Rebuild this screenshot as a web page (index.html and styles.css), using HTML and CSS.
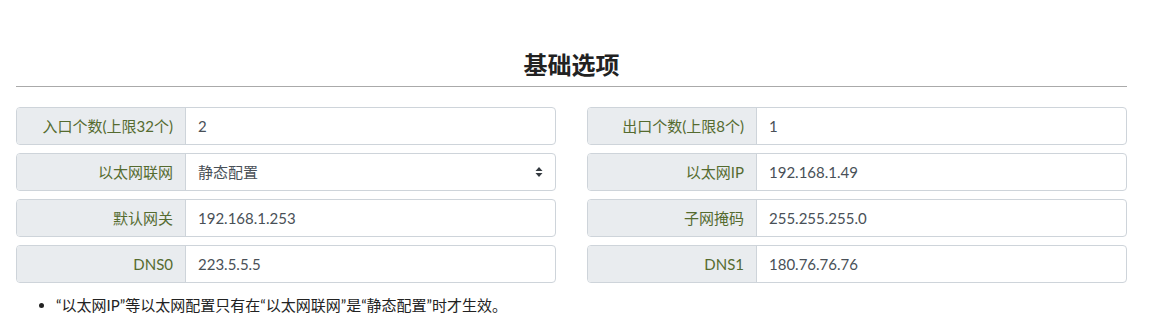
FILE: index.html
```html
<!DOCTYPE html>
<html lang="zh">
<head>
<meta charset="utf-8">
<link rel="stylesheet" href="styles.css">
</head>
<body>
<div class="page">
  <h2 class="title">基础选项</h2>
  <hr class="rule">
  <div class="grid">
    <div class="col">
      <div class="group"><span class="label">入口个数(上限32个)</span><span class="field">2</span></div>
      <div class="group"><span class="label">以太网联网</span><span class="field select">静态配置<svg class="caret" width="8" height="12" viewBox="0 0 8 12"><path d="M4 1 L7.5 5 H0.5 Z M4 11 L7.5 7 H0.5 Z" fill="#343a40"/></svg></span></div>
      <div class="group"><span class="label">默认网关</span><span class="field">192.168.1.253</span></div>
      <div class="group"><span class="label">DNS0</span><span class="field">223.5.5.5</span></div>
    </div>
    <div class="col">
      <div class="group"><span class="label">出口个数(上限8个)</span><span class="field">1</span></div>
      <div class="group"><span class="label">以太网IP</span><span class="field">192.168.1.49</span></div>
      <div class="group"><span class="label">子网掩码</span><span class="field">255.255.255.0</span></div>
      <div class="group"><span class="label">DNS1</span><span class="field">180.76.76.76</span></div>
    </div>
  </div>
  <ul class="notes">
    <li>“以太网IP”等以太网配置只有在“以太网联网”是“静态配置”时才生效。</li>
  </ul>
</div>
</body>
</html>
```
FILE: styles.css
```css
html, body {
  margin: 0;
  padding: 0;
  background: #fff;
}
body {
  font-family: "Lato", "Noto Sans CJK SC", sans-serif;
  font-size: 15px;
  color: #212529;
}
.page {
  width: 1111px;
  padding: 50px 0 0 16px;
}
.title {
  margin: 0;
  text-align: center;
  font-size: 24px;
  line-height: 30px;
  font-weight: 700;
  color: #222;
}
.rule {
  margin: 6px 0 0;
  border: 0;
  border-top: 1px solid #aaa;
  height: 0;
}
.grid {
  margin-top: 20px;
  display: grid;
  grid-template-columns: 540px 540px;
  column-gap: 31px;
}
.col {
  display: flex;
  flex-direction: column;
  gap: 8px;
}
.group {
  display: flex;
  height: 38px;
  box-sizing: border-box;
  border: 1px solid #ced4da;
  border-radius: 4px;
  overflow: hidden;
}
.label {
  width: 169px;
  flex: none;
  box-sizing: border-box;
  background: #e9ecef;
  border-right: 1px solid #ced4da;
  color: #556b2f;
  text-align: right;
  padding-right: 12px;
  line-height: 36px;
}
.field {
  flex: 1;
  padding-left: 12px;
  line-height: 36px;
  color: #495057;
  display: flex;
  align-items: center;
}
.select {
  justify-content: space-between;
  padding-right: 12px;
}
.caret {
  display: block;
}
.notes {
  margin: 11px 0 0;
  padding-left: 40px;
  line-height: 22px;
  color: #222;
}
```
